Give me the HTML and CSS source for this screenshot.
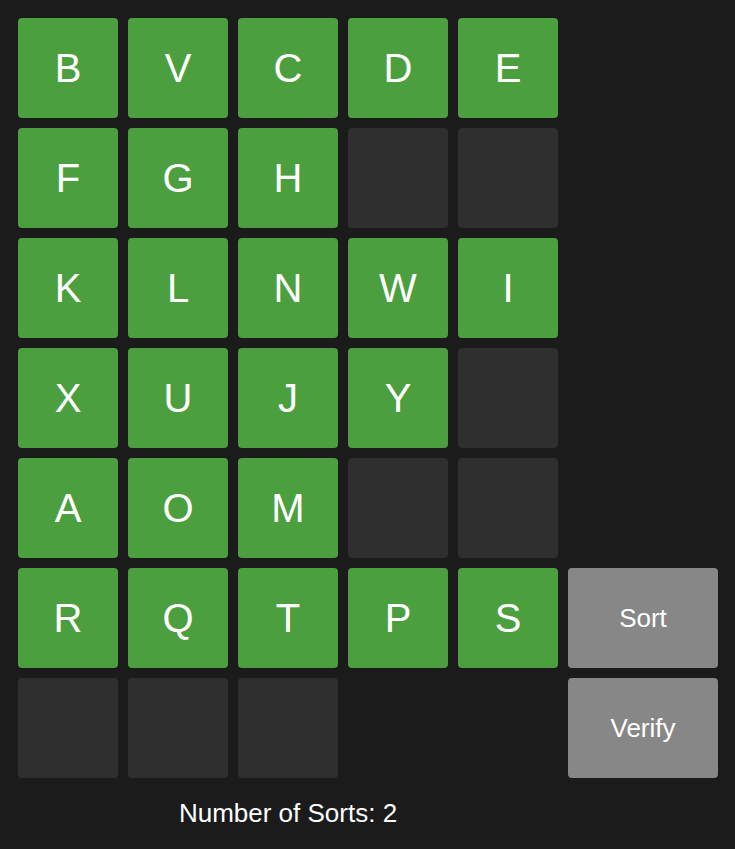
FILE: index.html
```html
<!DOCTYPE html>
<html>
<head>
<meta charset="utf-8">
<link rel="stylesheet" href="styles.css">
</head>
<body>
<div class="app">
  <div class="main">
    <div class="board">
      <div class="tile">B</div><div class="tile">V</div><div class="tile">C</div><div class="tile">D</div><div class="tile">E</div>
      <div class="tile">F</div><div class="tile">G</div><div class="tile">H</div><div class="tile empty"></div><div class="tile empty"></div>
      <div class="tile">K</div><div class="tile">L</div><div class="tile">N</div><div class="tile">W</div><div class="tile">I</div>
      <div class="tile">X</div><div class="tile">U</div><div class="tile">J</div><div class="tile">Y</div><div class="tile empty"></div>
      <div class="tile">A</div><div class="tile">O</div><div class="tile">M</div><div class="tile empty"></div><div class="tile empty"></div>
      <div class="tile">R</div><div class="tile">Q</div><div class="tile">T</div><div class="tile">P</div><div class="tile">S</div>
      <div class="tile empty"></div><div class="tile empty"></div><div class="tile empty"></div><div class="slot"></div><div class="slot"></div>
    </div>
    <div class="controls">
      <button class="btn">Sort</button>
      <button class="btn">Verify</button>
    </div>
  </div>
  <div class="counter">Number of Sorts: 2</div>
</div>
</body>
</html>
```
FILE: styles.css
```css
html, body {
  margin: 0;
  padding: 0;
  background: #1b1b1b;
}
body {
  font-family: "Liberation Sans", Arial, sans-serif;
  color: #ffffff;
}
.app {
  padding: 18px 0 0 18px;
}
.main {
  display: flex;
  gap: 10px;
  align-items: flex-end;
}
.board {
  display: grid;
  grid-template-columns: repeat(5, 100px);
  grid-auto-rows: 100px;
  gap: 10px;
}
.tile {
  background: #4c9f3e;
  border-radius: 4px;
  display: flex;
  align-items: center;
  justify-content: center;
  font-size: 40px;
  color: #ffffff;
}
.tile.empty {
  background: #2f2f2f;
}
.controls {
  display: flex;
  flex-direction: column;
  gap: 10px;
}
.btn {
  width: 150px;
  height: 100px;
  background: #878787;
  border: none;
  border-radius: 4px;
  color: #ffffff;
  font-family: "Liberation Sans", Arial, sans-serif;
  font-size: 26px;
  padding: 0;
}
.counter {
  width: 540px;
  text-align: center;
  font-size: 26px;
  margin-top: 20px;
}
```
